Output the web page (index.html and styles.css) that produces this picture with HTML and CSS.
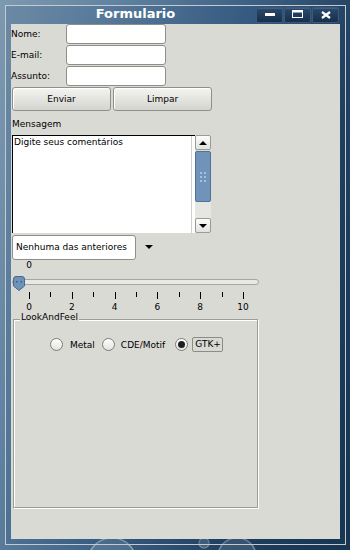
FILE: index.html
```html
<!DOCTYPE html>
<html lang="pt">
<head>
    <meta charset="UTF-8">
    <title>Formulario</title>
    <link rel="stylesheet" href="styles.css">
</head>
<body>
    <div class="window">
        <div class="titlebar">
            <div class="title">Formulario</div>
            <div class="controls">
                <span class="ctl">
                    <svg width="27" height="16" viewBox="0 0 27 16"><rect x="9" y="6" width="10" height="3" fill="#fff"/></svg>
                </span>
                <span class="ctl">
                    <svg width="27" height="16" viewBox="0 0 27 16"><rect x="8.5" y="3.5" width="10" height="7" fill="none" stroke="#fff"/><rect x="8" y="3" width="11" height="2.5" fill="#fff"/></svg>
                </span>
                <span class="ctl">
                    <svg width="27" height="16" viewBox="0 0 27 16"><path d="M10 5 L18 11 M18 5 L10 11" stroke="#fff" stroke-width="2.2"/></svg>
                </span>
            </div>
        </div>

        <div class="content">
            <!-- campos -->
            <div class="fields">
                <label for="nome">Nome:</label>
                <input type="text" id="nome" class="field">
                <label for="email">E-mail:</label>
                <input type="text" id="email" class="field">
                <label for="assunto">Assunto:</label>
                <input type="text" id="assunto" class="field">
            </div>

            <div class="actions">
                <button type="button" class="btn">Enviar</button>
                <button type="button" class="btn">Limpar</button>
            </div>

            <div class="msg-label">Mensagem</div>
            <div class="scrollpane">
                <div class="textarea">Digite seus comentários</div>
                <div class="scrollbar">
                    <div class="sb-btn"><span class="arrow-up"></span></div>
                    <div class="sb-thumb">
                        <svg width="6" height="10" viewBox="0 0 6 10">
                            <g fill="#a9c0da"><rect x="0" y="0" width="2" height="2"/><rect x="4" y="0" width="2" height="2"/><rect x="0" y="4" width="2" height="2"/><rect x="4" y="4" width="2" height="2"/><rect x="0" y="8" width="2" height="2"/><rect x="4" y="8" width="2" height="2"/></g>
                        </svg>
                    </div>
                    <div class="sb-track"></div>
                    <div class="sb-btn"><span class="arrow-down"></span></div>
                </div>
            </div>

            <div class="combo-row">
                <div class="combo">Nenhuma das anteriores</div>
                <span class="arrow-down combo-arrow"></span>
            </div>

            <!-- slider -->
            <div class="slider-value">0</div>
            <div class="slider">
                <div class="slider-track"></div>
                <svg class="slider-thumb" width="12" height="15" viewBox="0 0 12 15">
                    <path d="M0.5 3 Q0.5 0.5 3 0.5 H9 Q11.5 0.5 11.5 3 V10 L6 14.5 L0.5 10 Z" fill="#6f92b8" stroke="#46688e"/>
                    <rect x="3" y="5" width="1.5" height="1.5" fill="#3d5d80"/>
                    <rect x="7.5" y="5" width="1.5" height="1.5" fill="#3d5d80"/>
                </svg>
            </div>
            <div class="ticks">
                <span class="tick major"></span><span class="tick"></span>
                <span class="tick major"></span><span class="tick"></span>
                <span class="tick major"></span><span class="tick"></span>
                <span class="tick major"></span><span class="tick"></span>
                <span class="tick major"></span><span class="tick"></span>
                <span class="tick major"></span>
            </div>
            <div class="tick-labels">
                <span>0</span><span>2</span><span>4</span><span>6</span><span>8</span><span>10</span>
            </div>

            <!-- LookAndFeel -->
            <div class="group">
                <span class="group-title">LookAndFeel</span>
                <div class="radios">
                    <span class="radio r1"></span><span class="opt t1">Metal</span>
                    <span class="radio r2"></span><span class="opt t2">CDE/Motif</span>
                    <span class="radio r3 checked"></span><span class="opt t3 focus">GTK+</span>
                </div>
            </div>
        </div>
    </div>
</body>
</html>
```

FILE: styles.css
```css
body {
    margin: 0;
    width: 350px;
    height: 550px;
    overflow: hidden;
    font-family: "DejaVu Sans", sans-serif;
    font-size: 9px;
    color: #000;
    background:
        radial-gradient(circle at 112px 562px, rgba(255,255,255,.12) 0 23px, rgba(255,255,255,.5) 24px, rgba(255,255,255,0) 25.5px),
        radial-gradient(circle at 237px 557px, rgba(255,255,255,.12) 0 18px, rgba(255,255,255,.45) 19px, rgba(255,255,255,0) 20.5px),
        radial-gradient(circle at 204px 543px, rgba(255,255,255,.15) 0 4px, rgba(255,255,255,.4) 5px, rgba(255,255,255,0) 6px),
        linear-gradient(105deg, #7d99b0 0%, #5f81a0 25%, #3d6185 50%, #21405f 75%, #173450 100%);
}
.window {
    box-sizing: border-box;
    width: 341px;
    height: 540px;
    margin: 5px 0 0 5px;
    padding: 0 5px 4px 5px;
    border: 1px solid #c4cad0;
    background: rgba(20, 60, 110, 0.15);
}
.titlebar {
    display: flex;
    height: 18px;
}
.title {
    flex: 1;
    text-align: center;
    color: #fff;
    font-weight: bold;
    font-size: 13px;
    line-height: 15px;
    padding-left: 4px;
}
.controls {
    display: flex;
    gap: 1px;
    padding-top: 1px;
    padding-right: 1px;
}
.ctl {
    display: block;
    width: 27px;
    height: 16px;
    box-sizing: border-box;
    border: 1px solid #3b5a7a;
    border-radius: 2px;
    background: linear-gradient(#2b4a6b, #172f4b);
    box-shadow: inset 0 1px rgba(255, 255, 255, 0.12);
    overflow: hidden;
}
.ctl svg {
    display: block;
    margin: -1px 0 0 -1px;
}
.content {
    width: 329px;
    height: 515px;
    background: #dadad5;
}
.fields {
    display: grid;
    grid-template-columns: 55px 100px;
    grid-auto-rows: 20px;
    row-gap: 1px;
    align-items: center;
}
.field {
    box-sizing: border-box;
    width: 100px;
    height: 20px;
    margin: 0;
    padding: 0 3px;
    border: 1px solid #8e8e8b;
    border-radius: 3px;
    background: #fff;
}
.actions {
    display: flex;
    gap: 2px;
    margin: 1px 0 0 1px;
}
.btn {
    box-sizing: border-box;
    width: 99px;
    height: 24px;
    margin: 0;
    padding: 0;
    border: 1px solid #8f8f8b;
    border-radius: 3px;
    background: linear-gradient(#f4f4f2, #e2e2de 55%, #d4d4cf);
    box-shadow: inset 1px 1px #fff;
    font-family: "DejaVu Sans", sans-serif;
    font-size: 9px;
    color: #000;
}
.msg-label {
    padding: 8px 0 5px 1px;
    line-height: 11px;
}
.scrollpane {
    display: flex;
    width: 199px;
    height: 98px;
    margin-left: 1px;
}
.textarea {
    flex: 1;
    border-top: 1px solid #000;
    border-left: 1px solid #000;
    background: #fff;
    box-shadow: inset -3px 0 0 #fff, inset -4px 0 0 #cfcfcb;
    padding: 1px 0 0 1px;
    line-height: 11px;
}
.scrollbar {
    display: flex;
    flex-direction: column;
    width: 16px;
}
.sb-btn {
    box-sizing: border-box;
    height: 15px;
    border: 1px solid #9a9a96;
    border-radius: 2px;
    background: linear-gradient(#fdfdfc, #e2e2de);
    display: flex;
    align-items: center;
    justify-content: center;
}
.sb-thumb {
    box-sizing: border-box;
    height: 51px;
    margin-top: 1px;
    border: 1px solid #4f7298;
    border-radius: 2px;
    background: #7093b9;
    display: flex;
    align-items: center;
    justify-content: center;
}
.sb-track {
    flex: 1;
    background: #e6e6e2;
}
.arrow-up {
    width: 0;
    height: 0;
    border-left: 4px solid transparent;
    border-right: 4px solid transparent;
    border-bottom: 4px solid #000;
}
.arrow-down {
    width: 0;
    height: 0;
    border-left: 4px solid transparent;
    border-right: 4px solid transparent;
    border-top: 4px solid #000;
}
.combo-row {
    display: flex;
    align-items: center;
    margin: 2px 0 0 1px;
}
.combo {
    box-sizing: border-box;
    width: 124px;
    height: 25px;
    line-height: 23px;
    padding-left: 3px;
    border: 1px solid #8e8e8b;
    border-radius: 3px;
    background: #fff;
}
.combo-arrow {
    margin: -1px 0 0 9px;
}
.slider-value {
    width: 20px;
    margin: 0 0 0 8px;
    text-align: center;
    line-height: 10px;
}
.slider {
    display: grid;
    width: 247px;
    height: 15px;
    margin: 6px 0 0 1px;
}
.slider-track {
    grid-area: 1 / 1;
    align-self: start;
    box-sizing: border-box;
    height: 6px;
    margin-top: 3px;
    border: 1px solid #a6a6a2;
    border-radius: 3px;
    background: #e8e8e4;
}
.slider-thumb {
    grid-area: 1 / 1;
    display: block;
    margin-left: 1px;
}
.ticks {
    display: flex;
    justify-content: space-between;
    align-items: flex-start;
    width: 215px;
    height: 7px;
    margin: 1px 0 0 18px;
}
.tick {
    width: 1px;
    height: 5px;
    background: #000;
}
.tick.major {
    height: 7px;
}
.tick-labels {
    display: flex;
    justify-content: space-between;
    width: 234px;
    margin: 3px 0 0 8px;
    line-height: 11px;
}
.tick-labels span {
    width: 20px;
    text-align: center;
}
.group {
    box-sizing: border-box;
    width: 245px;
    height: 189px;
    margin: 6px 0 0 2px;
    border: 1px solid #9c9c98;
    box-shadow: inset 1px 1px 0 #fff, 1px 1px 0 #fff;
}
.group-title {
    display: block;
    width: fit-content;
    margin: -8px 0 0 6px;
    padding: 0 1px;
    line-height: 11px;
    background: #dadad5;
}
.radios {
    display: flex;
    align-items: center;
    height: 15px;
    margin-top: 14px;
    padding-left: 36px;
}
.radio {
    box-sizing: border-box;
    width: 13px;
    height: 13px;
    border: 1px solid #7c7c79;
    border-radius: 50%;
    background: linear-gradient(#ffffff, #e2e2de);
    display: flex;
    align-items: center;
    justify-content: center;
}
.radio.checked::after {
    content: "";
    width: 7px;
    height: 7px;
    border-radius: 50%;
    background: #1e1e1e;
}
.t1 { margin-left: 7px; }
.r2 { margin-left: 7px; }
.t2 { margin-left: 6px; }
.r3 { margin-left: 10px; }
.t3 { margin-left: 4px; }
.focus {
    box-sizing: border-box;
    height: 15px;
    line-height: 13px;
    padding: 0 1px 0 2px;
    border: 1px solid #8c8c89;
    border-radius: 2px;
}
```
